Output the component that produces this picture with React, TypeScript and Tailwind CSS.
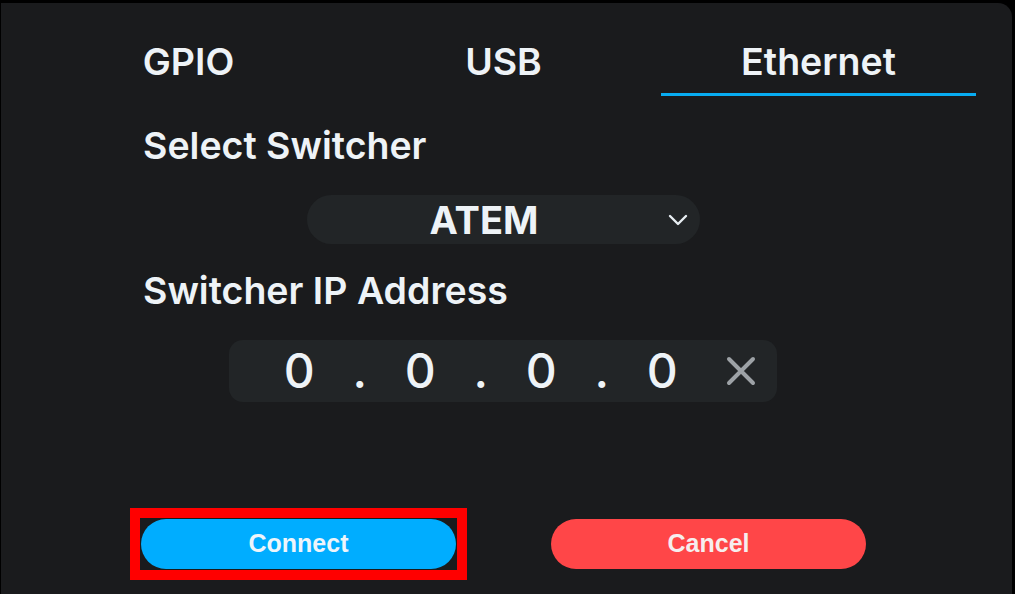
import { useState } from "react";

const tabs = ["GPIO", "USB", "Ethernet"];

function ChevronIcon() {
  return (
    <svg width="22" height="14" viewBox="0 0 22 14" fill="none" className="text-[#e8eef3]">
      <polyline points="3,3 11,11 19,3" stroke="currentColor" strokeWidth="2.4" strokeLinecap="round" strokeLinejoin="round" />
    </svg>
  );
}

function ClearIcon() {
  return (
    <svg width="30" height="30" viewBox="0 0 30 30" fill="none" className="text-[#9da2a6]">
      <path d="M3 3 L27 27 M27 3 L3 27" stroke="currentColor" strokeWidth="4" strokeLinecap="round" />
    </svg>
  );
}

export default function App() {
  const [active, setActive] = useState("Ethernet");
  const ip = ["0", ".", "0", ".", "0", ".", "0"];

  return (
    <div
      className="w-[1015px] h-[594px] overflow-hidden bg-black pt-[3px] pl-[1px] pr-[3px] text-[#eef3f7]"
      style={{ fontFamily: "Inter, 'Noto Sans', sans-serif" }}
    >
      <div className="flex h-full flex-col rounded-tr-[14px] bg-[#1a1b1d]">
        {/* Tabs */}
        <div className="ml-[30px] mt-[33px] grid w-[945px] grid-cols-3">
          {tabs.map((tab) => (
            <button
              key={tab}
              onClick={() => setActive(tab)}
              className={`flex h-[60px] items-center justify-center border-b-[3px] pb-[5px] text-[37.5px] font-semibold leading-[40px] ${
                active === tab ? "border-[#08acf2]" : "border-transparent"
              }`}
            >
              {tab}
            </button>
          ))}
        </div>

        {/* Select switcher */}
        <div className="ml-[142px] mt-[30px] text-[37.5px] font-semibold leading-[40px]">Select Switcher</div>
        <div className="ml-[306px] mt-[29px] flex h-[49px] w-[393px] items-center rounded-full bg-[#222527]">
          <div className="flex flex-1 justify-center pr-[6px] text-[38px] font-bold leading-[40px]">ATEM</div>
          <div className="mr-[11px]">
            <ChevronIcon />
          </div>
        </div>

        {/* IP address */}
        <div className="ml-[142px] mt-[27px] text-[37.5px] font-semibold leading-[40px]">Switcher IP Address</div>
        <div className="ml-[228px] mt-[29px] flex h-[62px] w-[548px] items-center rounded-[14px] bg-[#222527] pl-[40px]">
          {ip.map((c, i) => (
            <div key={i} className="w-[60.5px] text-center text-[48px] font-medium leading-[50px]">
              {c}
            </div>
          ))}
          <div className="ml-[33px]">
            <ClearIcon />
          </div>
        </div>

        {/* Actions */}
        <div
          className="ml-[129px] mt-[106px] flex items-center gap-[84px]"
          style={{ fontFamily: "'Liberation Sans', Arial, sans-serif" }}
        >
          <div className="border-[10px] border-[#ff0000] bg-[#1a1b1d] p-[1px]">
            <button className="flex h-[50px] w-[315px] items-center justify-center rounded-full bg-[#00adff] text-[25px] font-bold text-[#eef5fb]">
              Connect
            </button>
          </div>
          <button className="flex h-[50px] w-[315px] items-center justify-center rounded-full bg-[#ff4648] text-[25px] font-bold text-[#f6eeee]">
            Cancel
          </button>
        </div>
      </div>
    </div>
  );
}
